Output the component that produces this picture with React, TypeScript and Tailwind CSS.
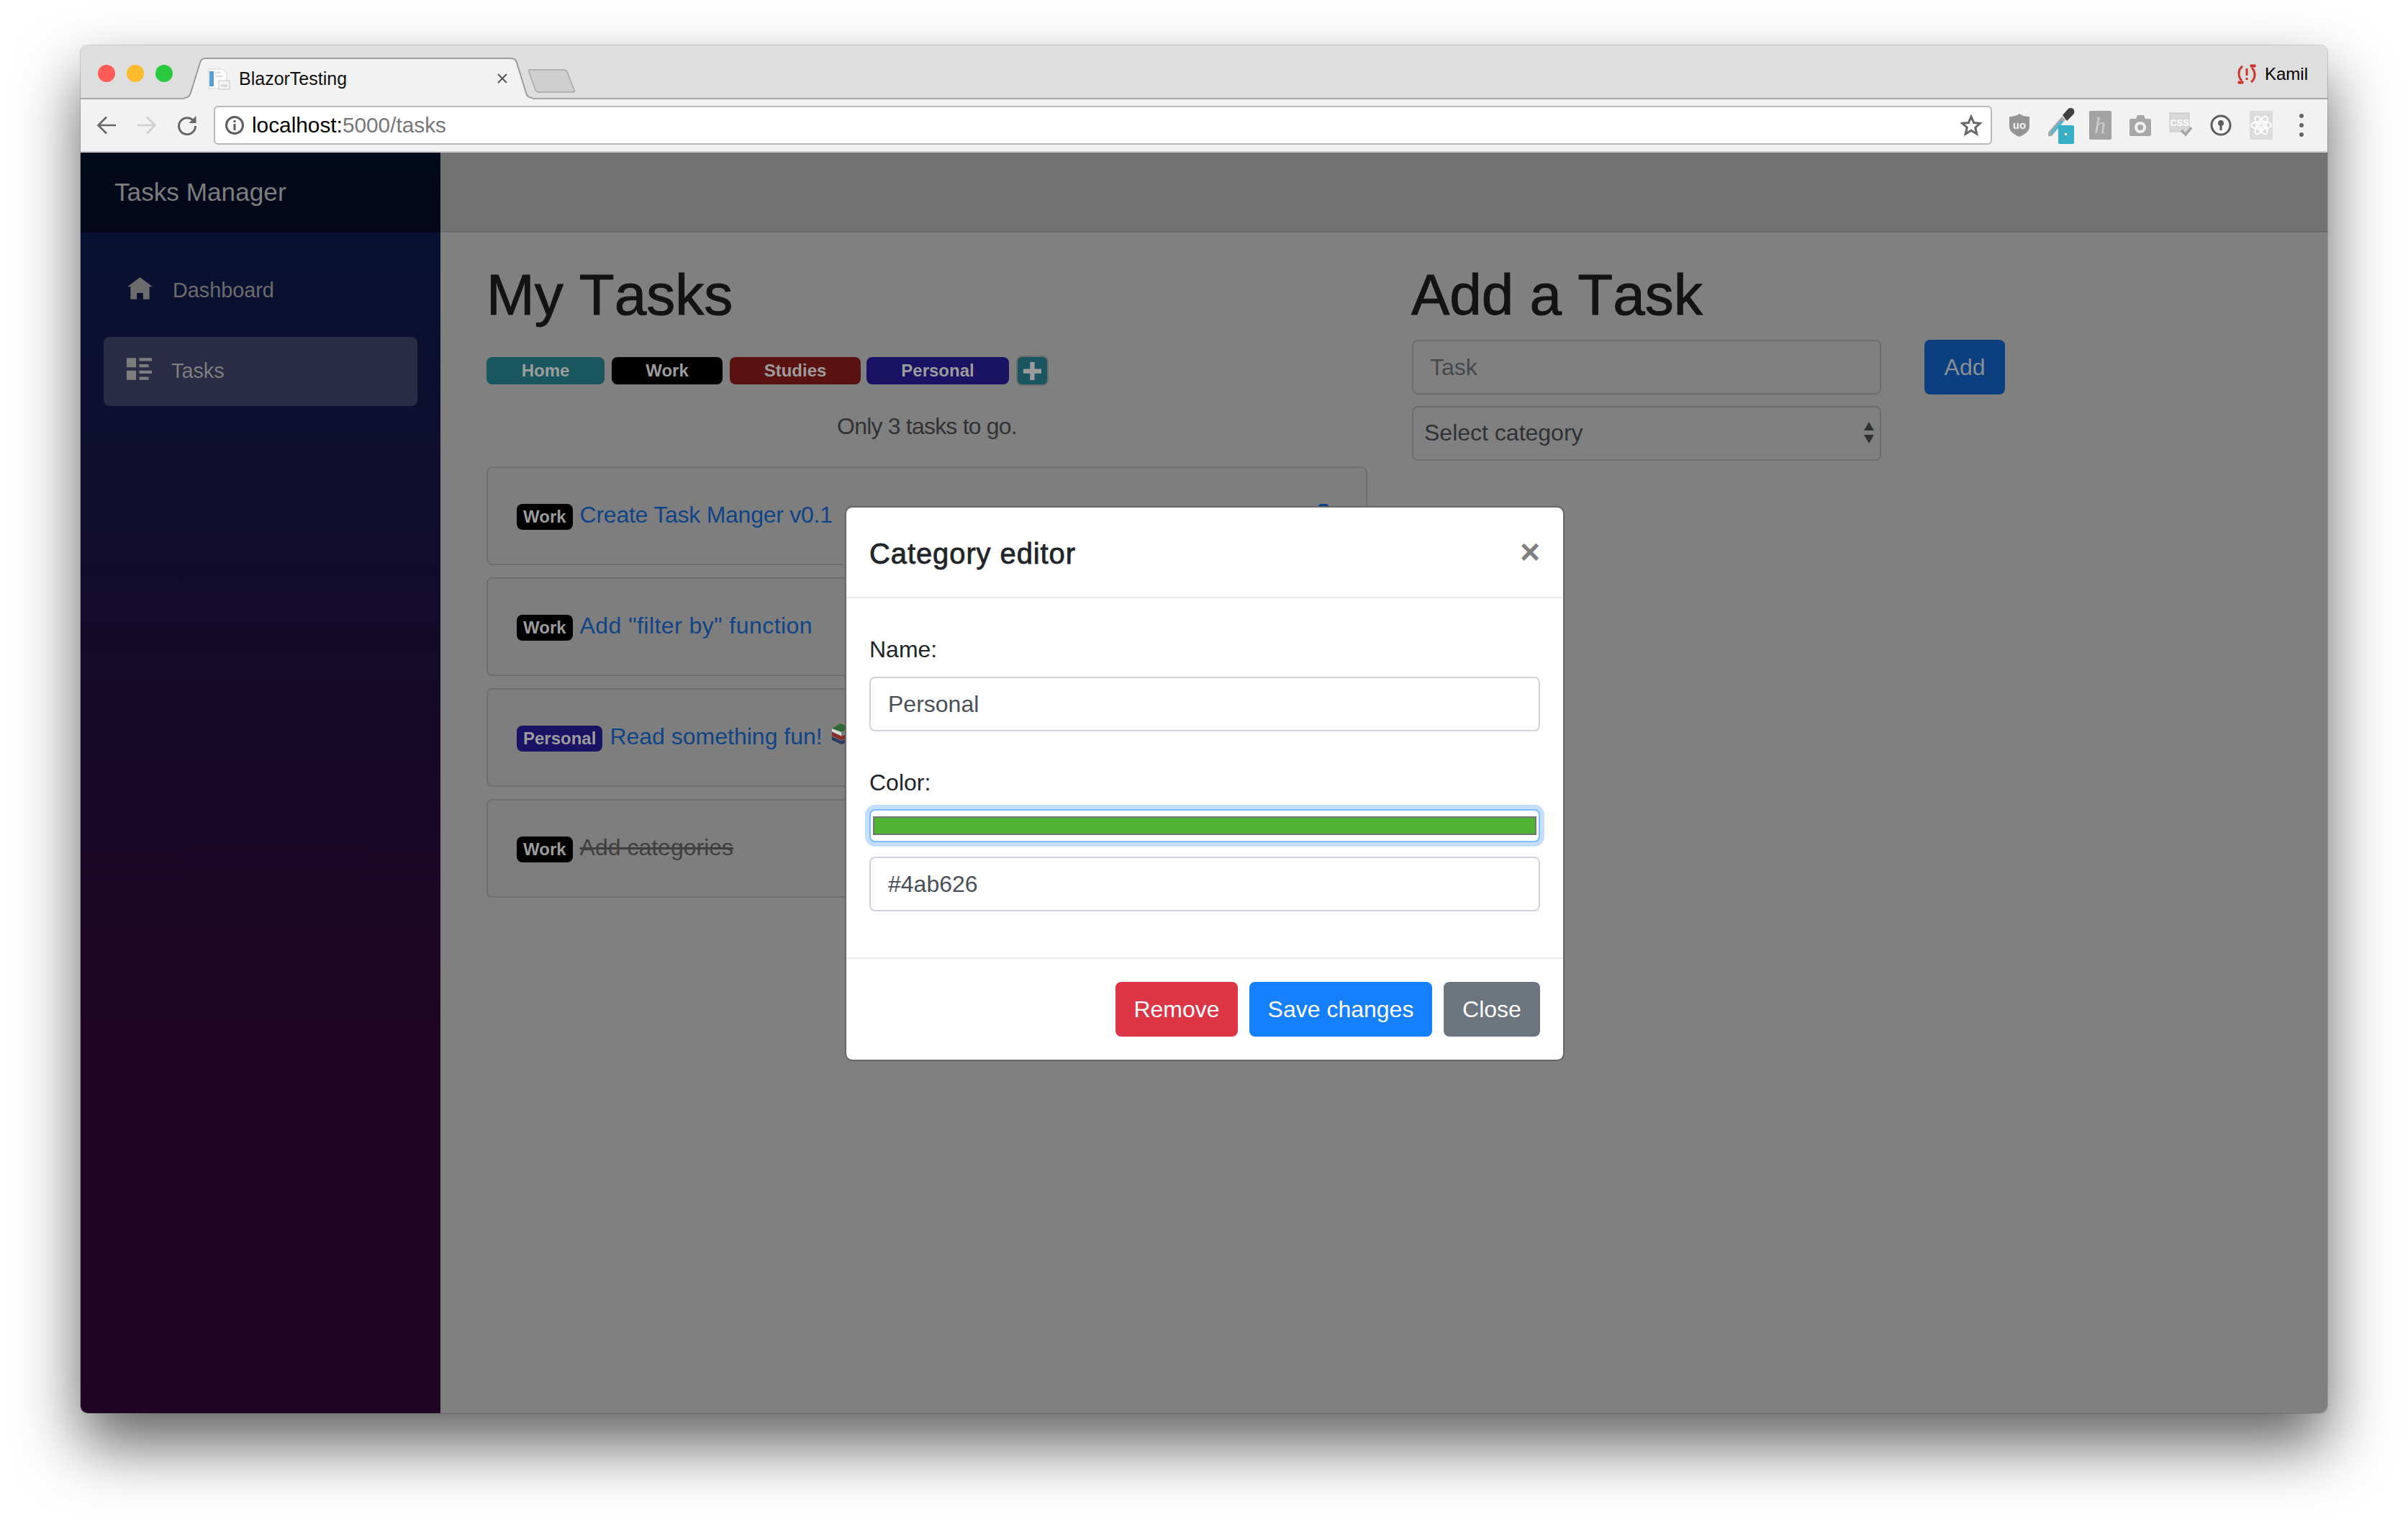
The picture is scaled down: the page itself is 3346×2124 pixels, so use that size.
const tags = [
  { name: 'Home', width: 'w-[164px] mr-[10px]', color: 'bg-[#1a5660]' },
  { name: 'Work', width: 'w-[154px] mr-[10px]', color: 'bg-black' },
  { name: 'Studies', width: 'w-[182px] mr-[8px]', color: 'bg-[#5a1210]' },
  { name: 'Personal', width: 'w-[198px] mr-[10px]', color: 'bg-[#1a1265]' },
];

function Tab() {
  return (
    <div className="relative z-10 -mb-[2px] h-[58px] w-[484px] shrink-0 self-end">
      <svg className="absolute inset-0" width="484" height="58" viewBox="0 0 484 58" fill="none">
        <path d="M0 58V56C5 56 8 53 9 49L22 7C23 3 26 1 30 1H454C458 1 461 3 462 7L475 49C476 53 479 56 484 56V58Z" fill="#f2f2f2" />
        <path d="M0 56C5 56 8 53 9 49L22 7C23 3 26 1 30 1H454C458 1 461 3 462 7L475 49C476 53 479 56 484 56" stroke="#9c9c9c" strokeWidth="2" />
      </svg>
      <div className="relative flex h-full items-center pl-[32px] pr-[34px]">
        <svg width="32" height="32" viewBox="0 0 32 32" className="shrink-0">
          <path d="M2 3H21L27 8V20H17V30H2Z" fill="#fbfbfb" stroke="#d8d8d8" />
          <rect x="3" y="6" width="6" height="21" fill="#5a9fd4" />
          <rect x="11" y="7" width="8" height="2" fill="#dcdcdc" />
          <rect x="11" y="12" width="10" height="2" fill="#dcdcdc" />
          <rect x="16" y="19" width="15" height="12" fill="#f4f4f4" stroke="#c6c6c6" />
          <rect x="19" y="24" width="9" height="4" fill="#d6dee4" />
        </svg>
        <span className="ml-[12px] text-[25px] leading-none text-[#111]">BlazorTesting</span>
        <svg className="ml-auto" width="16" height="16" viewBox="0 0 16 16" fill="none" stroke="#555" strokeWidth="2">
          <path d="M2 2L14 14M14 2L2 14" />
        </svg>
      </div>
    </div>
  );
}

function TitleBar() {
  return (
    <div className="flex h-[75px] items-start border-b-2 border-[#a3a3a3] bg-[#dedede]">
      <div className="mt-[27px] flex w-[144px] shrink-0 gap-[16px] pl-[24px]">
        <div className="h-[24px] w-[24px] rounded-full bg-[#fc5b57]" />
        <div className="h-[24px] w-[24px] rounded-full bg-[#fdbb2d]" />
        <div className="h-[24px] w-[24px] rounded-full bg-[#29c940]" />
      </div>
      <Tab />
      <svg className="-ml-[6px] mt-[33px] shrink-0" width="66" height="33" viewBox="0 0 66 33">
        <path d="M2 1H50C52 1 53 2 54 4L64 29C65 31 64 32 62 32H14C12 32 11 31 10 29L1 4C0 2 0 1 2 1Z" fill="#cfcfcf" stroke="#a6a6a6" strokeWidth="1.5" />
      </svg>
      <div className="ml-auto mr-[27px] mt-[26px] flex h-[28px] items-center gap-[12px]">
        <svg width="26" height="28" viewBox="0 0 26 28" fill="none" stroke="#cf3428" strokeWidth="3">
          <path d="M7 3C3 6 2 10 2 13C2 17 3 20 6 23" />
          <path d="M19 25C23 22 24 18 24 15C24 11 23 8 20 5" />
          <path d="M1 24H8V27H1Z" fill="#cf3428" strokeWidth="1" />
          <path d="M25 4H18V1H25Z" fill="#cf3428" strokeWidth="1" />
          <path d="M13 6V16M13 19V22" />
        </svg>
        <span className="text-[24px] leading-none text-black">Kamil</span>
      </div>
    </div>
  );
}

function Slot({ children }: { children: React.ReactNode }) {
  return <div className="flex h-[56px] w-[56px] shrink-0 items-center justify-center">{children}</div>;
}

function Toolbar() {
  return (
    <div className="flex h-[74px] items-center border-b-2 border-[#c9c9c9] bg-[#f2f2f2] pl-[8px]">
      <Slot>
        <svg width="28" height="26" viewBox="0 0 28 26" fill="none" stroke="#666" strokeWidth="2.6">
          <path d="M27 13H3M14 1.5L2.5 13L14 24.5" />
        </svg>
      </Slot>
      <Slot>
        <svg width="28" height="26" viewBox="0 0 28 26" fill="none" stroke="#cfcfcf" strokeWidth="2.6">
          <path d="M1 13H25M14 1.5L25.5 13L14 24.5" />
        </svg>
      </Slot>
      <Slot>
        <svg width="28" height="28" viewBox="0 0 28 28" fill="none" stroke="#666" strokeWidth="3">
          <path d="M23 8A11.5 11.5 0 1 0 25.5 15" />
          <path d="M26.5 1V11H16.5Z" fill="#666" stroke="none" />
        </svg>
      </Slot>
      <div className="ml-[9px] flex h-[54px] w-[2471px] shrink-0 items-center rounded-[6px] border-2 border-[#b8b8b8] bg-white pl-[13px] pr-[12px]">
        <svg width="28" height="28" viewBox="0 0 28 28" className="shrink-0" fill="none" stroke="#5f5f5f">
          <circle cx="14" cy="14" r="11.5" strokeWidth="3" />
          <path d="M14 12V21" strokeWidth="3" />
          <path d="M14 7V10" strokeWidth="3" />
        </svg>
        <span className="ml-[10px] text-[29.8px] leading-none text-black">
          localhost:<span className="text-[#777]">5000/tasks</span>
        </span>
        <svg className="ml-auto" width="30" height="30" viewBox="0 0 30 30" fill="none" stroke="#666" strokeWidth="3">
          <path d="M15 3L18.6 11.5L27.5 12.3L20.7 18.2L22.8 27L15 22.3L7.2 27L9.3 18.2L2.5 12.3L11.4 11.5Z" />
        </svg>
      </div>
      <div className="ml-[10px] flex">
        <Slot>
          <svg width="30" height="34" viewBox="0 0 30 34">
            <path d="M15 1C19 4 24 5 29 5V19C29 26 22 30 15 33C8 30 1 26 1 19V5C6 5 11 4 15 1Z" fill="#959595" />
            <text x="15" y="22" textAnchor="middle" fontSize="15" fontWeight="700" fill="#f2f2f2" fontFamily="Liberation Sans">uo</text>
          </svg>
        </Slot>
        <Slot>
          <svg className="ml-[5px]" width="44" height="52" viewBox="0 0 44 52">
            <path d="M3 36L22 14L27 18L8 41L3 41Z" fill="#a8a8a8" />
            <path d="M6 36L21 19L24 22L8 39Z" fill="#4fb9d3" />
            <path d="M23 12L31 3C34 1 38 2 39 5C40 8 39 10 37 12L29 20Z" fill="#3f3f3f" />
            <rect x="17" y="26" width="22" height="26" rx="2" fill="#38afc6" />
            <rect x="26" y="37" width="3" height="3" fill="#fff" />
          </svg>
        </Slot>
        <Slot>
          <div className="flex h-[40px] w-[31px] items-center justify-center rounded-[2px] bg-[#a3a3a3] font-['Liberation_Serif',serif] text-[32px] italic leading-none text-[#cdcdcd]">
            h
          </div>
        </Slot>
        <Slot>
          <svg width="30" height="30" viewBox="0 0 30 30">
            <path d="M2 6H9L11 1H20L22 6H28C29 6 30 7 30 8V28C30 29 29 30 28 30H2C1 30 0 29 0 28V8C0 7 1 6 2 6Z" fill="#a8a8a8" />
            <circle cx="15" cy="18" r="8" fill="#f0f0f0" />
            <circle cx="15" cy="18" r="4" fill="#a8a8a8" />
          </svg>
        </Slot>
        <Slot>
          <svg width="32" height="36" viewBox="0 0 32 36">
            <rect x="1" y="1" width="27" height="26" fill="#d8d8d8" stroke="#c4c4c4" />
            <text x="14.5" y="19" textAnchor="middle" fontSize="13" fontWeight="700" fill="#fff" fontFamily="Liberation Sans">CSS</text>
            <path d="M17 25L23 31L31 21" fill="none" stroke="#a3a3a3" strokeWidth="3.5" />
          </svg>
        </Slot>
        <Slot>
          <svg width="30" height="30" viewBox="0 0 30 30">
            <circle cx="15" cy="15" r="13" fill="#f7f7f7" stroke="#5c5c5c" strokeWidth="3" />
            <circle cx="15" cy="12" r="4" fill="#5c5c5c" />
            <rect x="13.5" y="13" width="3" height="9" fill="#5c5c5c" />
          </svg>
        </Slot>
        <Slot>
          <div className="flex h-[40px] w-[32px] items-center justify-center rounded-[2px] bg-[#dcdcdc]">
            <svg width="30" height="30" viewBox="-15 -15 30 30" fill="none" stroke="#fff" strokeWidth="2">
              <ellipse rx="14" ry="5.5" />
              <ellipse rx="14" ry="5.5" transform="rotate(60)" />
              <ellipse rx="14" ry="5.5" transform="rotate(120)" />
              <circle r="2.8" />
            </svg>
          </div>
        </Slot>
        <Slot>
          <div className="flex flex-col gap-[7px]">
            <div className="h-[6px] w-[6px] rounded-full bg-[#666]" />
            <div className="h-[6px] w-[6px] rounded-full bg-[#666]" />
            <div className="h-[6px] w-[6px] rounded-full bg-[#666]" />
          </div>
        </Slot>
      </div>
    </div>
  );
}

function Sidebar() {
  return (
    <div className="w-[500px] shrink-0 bg-[linear-gradient(180deg,#061333_0%,#1f0423_70%)]">
      <div className="flex h-[111px] items-center bg-black/45 pl-[47px] text-[35.2px] text-[#7d7d7d]">Tasks Manager</div>
      <div className="flex flex-col gap-[16px] px-[32px] pt-[33px]">
        <div className="flex h-[96px] items-center rounded-lg pl-[33px] text-[28.8px] text-[#6c6c6c]">
          <svg className="mb-[8px] mr-[28px]" width="35" height="31" viewBox="0 0 8 7" fill="#6c6c6c">
            <path d="M4 0l-4 3h1v4h2v-2h2v2h2v-4.03l1 .03-4-3z" />
          </svg>
          Dashboard
        </div>
        <div className="flex h-[96px] items-center rounded-lg bg-[#292c44] pl-[32px] text-[28.8px] text-[#7d7d7d]">
          <svg className="mb-[8px] mr-[27px]" width="35" height="31" viewBox="0 0 8 7" fill="#7d7d7d">
            <path d="M0 0v3h3v-3h-3zm4 0v1h4v-1h-4zm0 2v1h3v-1h-3zm-4 2v3h3v-3h-3zm4 0v1h4v-1h-4zm0 2v1h3v-1h-3z" />
          </svg>
          Tasks
        </div>
      </div>
    </div>
  );
}

function Badge({ name, color }: { name: string; color: string }) {
  return <span className={`rounded-lg px-[9px] text-[24px] font-bold leading-[36px] text-[#9c9c9c] ${color}`}>{name}</span>;
}

function TaskCard({ children }: { children: React.ReactNode }) {
  return (
    <div className="flex h-[137px] items-baseline gap-[10px] rounded-lg border-2 border-[#6f6f6f] bg-[#7e7e7e] px-[40px] pt-[41px] text-[32px] leading-[48px]">
      {children}
    </div>
  );
}

function Tasks() {
  return (
    <div className="w-[1224px] shrink-0">
      <h1 className="text-[80px] leading-[96px] text-[#121315] [font-kerning:none] [-webkit-text-stroke:1px_#121315]">My Tasks</h1>
      <div className="mt-[36px] flex h-[42px] items-center">
        {tags.map((tag) => (
          <div key={tag.name} className={`flex h-[38px] items-center justify-center rounded-lg text-[24px] font-bold text-[#9c9c9c] ${tag.width} ${tag.color}`}>
            {tag.name}
          </div>
        ))}
        <div className="flex h-[42px] w-[45px] items-center justify-center rounded-lg border-2 border-[#6d6d6d] bg-[#1a5660]">
          <svg width="25" height="25" viewBox="0 0 8 8" fill="#9c9c9c">
            <path d="M3 0v3h-3v2h3v3h2v-3h3v-2h-3v-3h-2z" />
          </svg>
        </div>
      </div>
      <p className="mt-[32px] text-center text-[32px] leading-[48px] tracking-[-0.8px] text-[#303234]">Only 3 tasks to go.</p>
      <div className="mt-[32px] flex flex-col gap-[17px]">
        <TaskCard>
          <Badge name="Work" color="bg-black" />
          <span className="tracking-[-0.25px] text-[#0f4487]">Create Task Manger v0.1</span>
          <div className="ml-auto mr-[6px] flex gap-[14px] self-start">
            <div className="mt-[12px] h-[26px] w-[26px] rounded-md border-2 border-[#5f5f5f]" />
            <div className="mt-[9px] flex w-[26px] flex-col items-center">
              <div className="h-[4px] w-[14px] rounded-t-[7px] bg-[#0c3f80]" />
              <div className="h-[26px] w-[26px] rounded-t-[4px] bg-[#0c3f80]" />
            </div>
          </div>
        </TaskCard>
        <TaskCard>
          <Badge name="Work" color="bg-black" />
          <span className="tracking-[0.45px] text-[#0f4487]">Add "filter by" function</span>
        </TaskCard>
        <TaskCard>
          <Badge name="Personal" color="bg-[#1a1265]" />
          <span className="text-[#0f4487]">Read something fun!</span>
          <svg className="ml-[2px] self-start mt-[5px]" width="32" height="30" viewBox="0 0 32 30">
            <path d="M1 8L13 1L26 7L14 13Z" fill="#2f6a35" />
            <path d="M1 8V12L14 18V13Z" fill="#d8d8d8" />
            <path d="M1 13L14 19L28 13V20L14 24L1 18Z" fill="#8c2a26" />
            <path d="M1 19L14 25L28 20V26L14 30L1 24Z" fill="#2d3a63" />
          </svg>
        </TaskCard>
        <TaskCard>
          <Badge name="Work" color="bg-black" />
          <span className="text-[#3f3f3f] line-through">Add categories</span>
        </TaskCard>
      </div>
    </div>
  );
}

function AddTask() {
  return (
    <div className="ml-[62px] w-[824px] shrink-0">
      <h1 className="-ml-[1px] text-[80px] leading-[96px] text-[#121315] [font-kerning:none] [-webkit-text-stroke:1px_#121315]">Add a Task</h1>
      <div className="mt-[14px] flex gap-[60px]">
        <div className="flex h-[76px] w-[652px] items-center rounded-lg border-2 border-[#6b6f74] pl-[23px] text-[32px] text-[#45494d]">Task</div>
        <div className="flex h-[76px] w-[112px] items-center justify-center rounded-lg bg-[#0c3f80] text-[32px] text-[#8a8f95]">Add</div>
      </div>
      <div className="mt-[16px] flex h-[76px] w-[652px] items-center justify-between rounded-lg border-2 border-[#6b6f74] pb-[2px] pl-[15px] pr-[8px] text-[32px] text-[#2f3235]">
        Select category
        <svg width="14" height="30" viewBox="0 0 14 30" fill="#2f3235">
          <path d="M7 0L14 12H0Z" />
          <path d="M7 30L14 18H0Z" />
        </svg>
      </div>
    </div>
  );
}

function TextField({ value }: { value: string }) {
  return (
    <input
      readOnly
      value={value}
      className="h-[76px] w-full rounded-lg border-2 border-[#ced4da] bg-white px-[24px] text-[32px] text-[#495057]"
    />
  );
}

function CategoryModal() {
  return (
    <div className="absolute left-[1062px] top-[491px] w-[1000px] rounded-[10px] border-2 border-[#666] bg-white bg-clip-padding text-[32px] text-[#212529]">
      <div className="flex items-start justify-between border-b-2 border-[#e9ecef] px-[32px] pb-[30px] pt-[34px]">
        <h5 className="text-[40px] leading-[60px] tracking-[0.9px] [-webkit-text-stroke:0.8px_#212529]">Category editor</h5>
        <span className="mt-[4px] text-[48px] font-bold leading-[48px] text-[#808080]">×</span>
      </div>
      <div className="px-[32px] pb-[64px] pt-[47px]">
        <label className="mb-[14px] block leading-[48px]">Name:</label>
        <TextField value="Personal" />
        <label className="mt-[47px] block leading-[48px]">Color:</label>
        <div className="mt-[13px] h-[46px] rounded-lg border-2 border-[#80bdff] bg-white px-[3px] py-[8px] shadow-[0_0_0_6px_#c3deff]">
          <div className="h-[26px] border-2 border-[#757575] bg-[#4fb334]" />
        </div>
        <div className="mt-[20px]">
          <TextField value="#4ab626" />
        </div>
      </div>
      <div className="flex justify-end gap-[16px] border-t-2 border-[#e9ecef] p-[32px] text-white">
        <div className="flex h-[76px] w-[170px] items-center justify-center rounded-lg bg-[#dc3545]">Remove</div>
        <div className="flex h-[76px] w-[254px] items-center justify-center rounded-lg bg-[#167ffc]">Save changes</div>
        <div className="flex h-[76px] w-[134px] items-center justify-center rounded-lg bg-[#6c757d]">Close</div>
      </div>
    </div>
  );
}

export default function App() {
  return (
    <div className="h-[2124px] w-[3346px] overflow-hidden bg-white pl-[112px] pt-[63px] font-['Liberation_Sans',Arial,sans-serif]">
      <div className="h-[1900px] w-[3122px] overflow-hidden rounded-[10px] shadow-[0_0_0_1px_rgba(0,0,0,0.15),0_44px_88px_rgba(0,0,0,0.62)]">
        <TitleBar />
        <Toolbar />
        {/* page colours below are the ones seen through the modal backdrop */}
        <div className="relative flex h-[1751px] bg-[#808080]">
          <Sidebar />
          <div className="flex-1">
            <div className="h-[111px] border-b-2 border-[#686868] bg-[#727272]" />
            <div className="flex pl-[64px] pt-[39px]">
              <Tasks />
              <AddTask />
            </div>
          </div>
          <CategoryModal />
        </div>
      </div>
    </div>
  );
}
